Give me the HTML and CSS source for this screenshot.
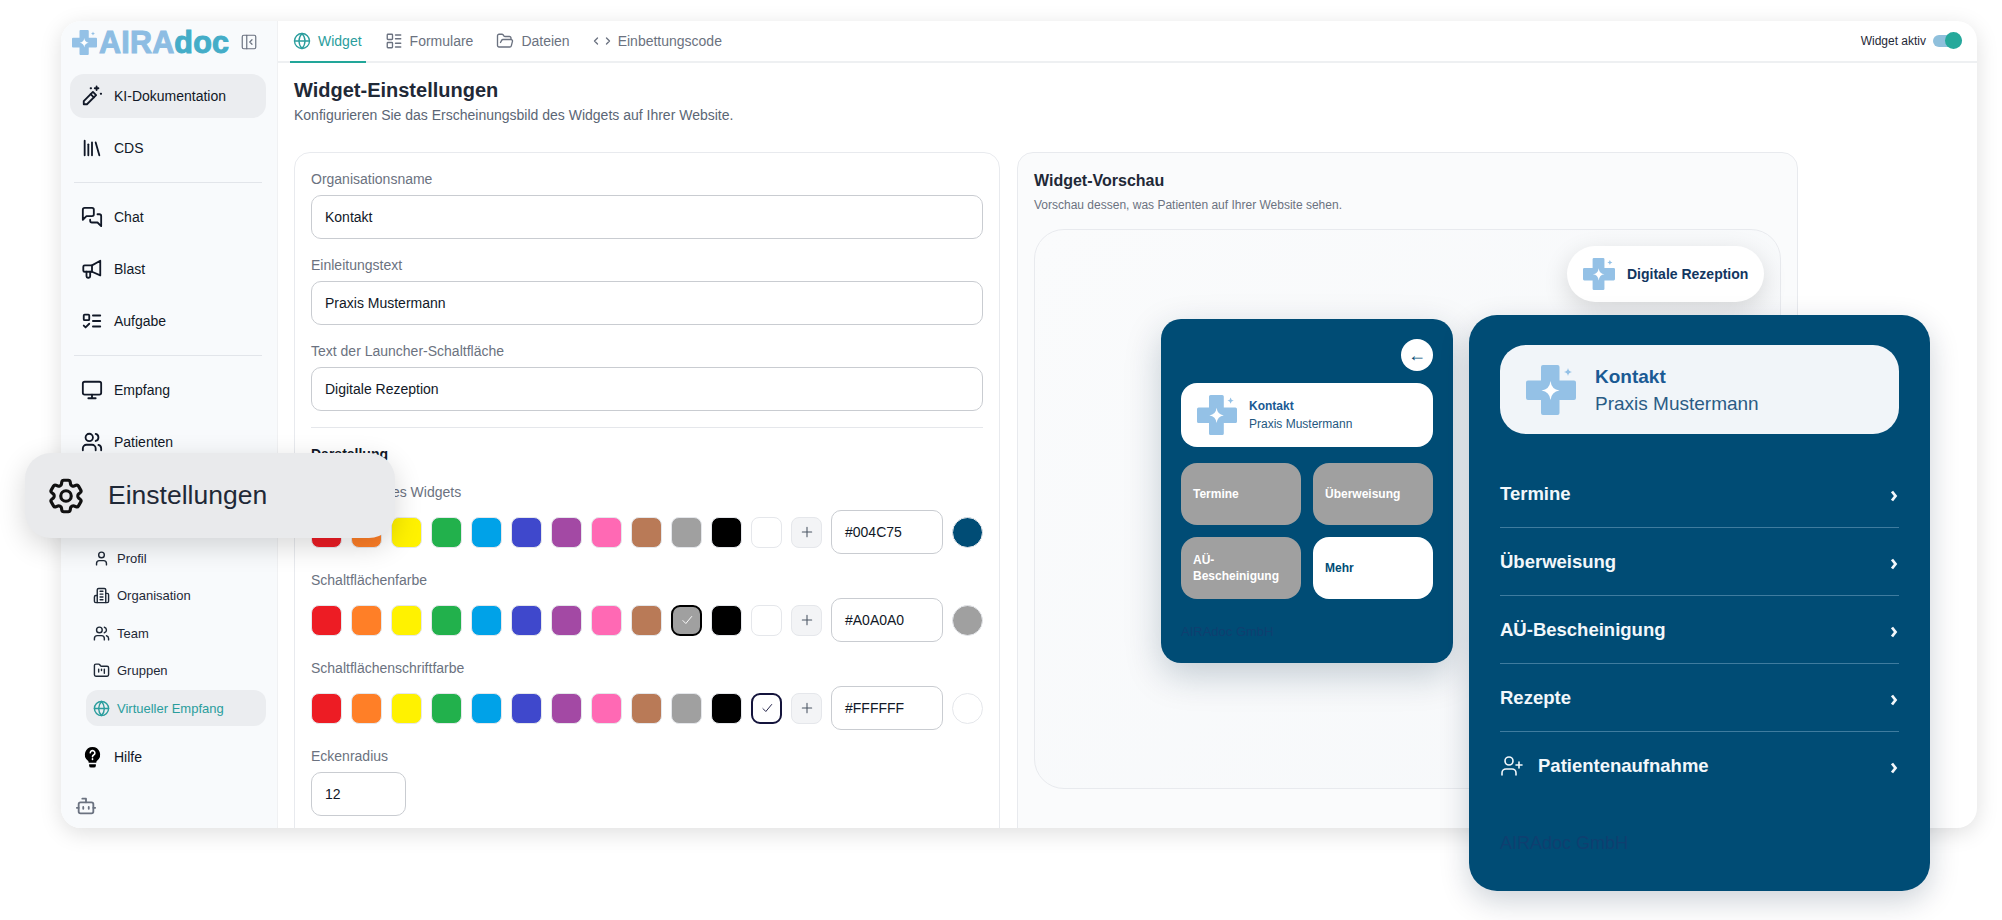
FILE: index.html
```html
<!DOCTYPE html>
<html lang="de">
<head>
  <meta charset="UTF-8">
  <title>AIRAdoc Widget-Einstellungen</title>
  <link rel="stylesheet" href="styles.css">
</head>
<body>
  <svg class="defs" width="0" height="0">
    <symbol id="cross" viewBox="0 0 100 100">
      <path fill="#94c1e6" d="M34 0h29a4 4 0 0 1 4 4v27h29a4 4 0 0 1 4 4v31a4 4 0 0 1-4 4H67v26a4 4 0 0 1-4 4H34a4 4 0 0 1-4-4V70H4a4 4 0 0 1-4-4V35a4 4 0 0 1 4-4h26V4a4 4 0 0 1 4-4z"/>
      <path fill="#fff" d="M49 32q2 17 18 19q-16 2-18 19q-2-17-18-19q16-2 18-19z"/>
      <path fill="#94c1e6" d="M84 6q1 7 8 8q-7 1-8 8q-1-7-8-8q7-1 8-8z"/>
    </symbol>
    <symbol id="globe" viewBox="0 0 24 24"><circle cx="12" cy="12" r="10"/><path d="M12 2a14.5 14.5 0 0 0 0 20 14.5 14.5 0 0 0 0-20"/><path d="M2 12h20"/></symbol>
    <symbol id="users" viewBox="0 0 24 24"><path d="M16 21v-2a4 4 0 0 0-4-4H6a4 4 0 0 0-4 4v2"/><circle cx="9" cy="7" r="4"/><path d="M22 21v-2a4 4 0 0 0-3-3.87"/><path d="M16 3.13a4 4 0 0 1 0 7.75"/></symbol>
    <symbol id="check" viewBox="0 0 24 24"><path d="M5 13l5 5L20 6"/></symbol>
    <symbol id="plus" viewBox="0 0 24 24"><path d="M5 12h14M12 5v14"/></symbol>
    <symbol id="chev" viewBox="0 0 8 12"><path d="M2 1.5 5.5 6 2 10.5"/></symbol>
  </svg>

  <div class="stage">
    <div class="app">
      <aside class="sidebar">
        <div class="logoRow">
          <svg class="logoMark"><use href="#cross"/></svg>
          <span class="logoText">AIRA<span class="logoDoc">doc</span></span>
          <svg class="icon collapse" viewBox="0 0 24 24"><rect x="3" y="3" width="18" height="18" rx="2"/><path d="M9 3v18"/><path d="m16 15-3-3 3-3"/></svg>
        </div>

        <a class="navItem active">
          <svg class="icon" viewBox="0 0 24 24"><path d="M3 17.5 13 7.5l3.5 3.5-10 10H3z"/><path d="m10.5 10 3.5 3.5"/><path d="M17 1.5v4M15 3.5h4"/><path d="M21.5 9.5h.5M10.5 3.5h.5"/></svg>
          KI-Dokumentation
        </a>
        <a class="navItem">
          <svg class="icon" viewBox="0 0 24 24"><path d="m16 6 4 14"/><path d="M12 6v14"/><path d="M8 8v12"/><path d="M4 4v16"/></svg>
          CDS
        </a>
        <div class="navLine"></div>
        <a class="navItem">
          <svg class="icon" viewBox="0 0 24 24"><path d="M14 9a2 2 0 0 1-2 2H6l-4 4V4a2 2 0 0 1 2-2h8a2 2 0 0 1 2 2z"/><path d="M18 9h2a2 2 0 0 1 2 2v11l-4-4h-6a2 2 0 0 1-2-2v-1"/></svg>
          Chat
        </a>
        <a class="navItem">
          <svg class="icon" viewBox="0 0 24 24"><path d="M21 3v16l-9-4H4a1.5 1.5 0 0 1-1.5-1.5v-4A1.5 1.5 0 0 1 4 8h8z"/><path d="M12 8v7"/><path d="M6 15v5a1.5 1.5 0 0 0 1.5 1.5h1A1.5 1.5 0 0 0 10 20v-5"/></svg>
          Blast
        </a>
        <a class="navItem">
          <svg class="icon" viewBox="0 0 24 24"><rect x="3" y="5" width="6" height="6" rx="1"/><path d="m3 17 2 2 4-4"/><path d="M13 6h8M13 12h8M13 18h8"/></svg>
          Aufgabe
        </a>
        <div class="navLine"></div>
        <a class="navItem">
          <svg class="icon" viewBox="0 0 24 24"><rect x="2" y="3" width="20" height="14" rx="2"/><path d="M8 21h8M12 17v4"/></svg>
          Empfang
        </a>
        <a class="navItem">
          <svg class="icon"><use href="#users"/></svg>
          Patienten
        </a>
        <!-- row of the raised Einstellungen item -->
        <div class="navItem"></div>

        <div class="subNav">
          <a class="subItem">
            <svg class="icon" viewBox="0 0 24 24"><path d="M19 21v-2a4 4 0 0 0-4-4H9a4 4 0 0 0-4 4v2"/><circle cx="12" cy="7" r="4"/></svg>
            Profil
          </a>
          <a class="subItem">
            <svg class="icon" viewBox="0 0 24 24"><path d="M6 22V4a2 2 0 0 1 2-2h8a2 2 0 0 1 2 2v18Z"/><path d="M6 12H4a2 2 0 0 0-2 2v6a2 2 0 0 0 2 2h2"/><path d="M18 9h2a2 2 0 0 1 2 2v9a2 2 0 0 1-2 2h-2"/><path d="M10 6h4M10 10h4M10 14h4M10 18h4"/></svg>
            Organisation
          </a>
          <a class="subItem">
            <svg class="icon"><use href="#users"/></svg>
            Team
          </a>
          <a class="subItem">
            <svg class="icon" viewBox="0 0 24 24"><path d="M4 20h16a2 2 0 0 0 2-2V8a2 2 0 0 0-2-2h-7.93a2 2 0 0 1-1.66-.9l-.82-1.2A2 2 0 0 0 7.93 3H4a2 2 0 0 0-2 2v13c0 1.1.9 2 2 2Z"/><path d="M8 10v4M12 10v2M16 10v6"/></svg>
            Gruppen
          </a>
          <a class="subItem subActive">
            <svg class="icon"><use href="#globe"/></svg>
            Virtueller Empfang
          </a>
        </div>

        <a class="navItem help">
          <svg class="bulb" viewBox="0 0 24 24"><path d="M12 1a8 8 0 0 0-5 14.2c.8.7 1 1.3 1 2.3h8c0-1 .2-1.6 1-2.3A8 8 0 0 0 12 1z"/><path d="M8.5 19h7v1.5a2 2 0 0 1-2 2h-3a2 2 0 0 1-2-2z"/><path class="bulbMark" d="M9.7 7a2.4 2.4 0 1 1 3.4 2.4c-.7.4-1.1.8-1.1 1.7M12 13.4v.6"/></svg>
          Hilfe
        </a>
        <svg class="icon bot" viewBox="0 0 24 24"><path d="M12 8V4H8"/><rect x="4" y="8" width="16" height="12" rx="2"/><path d="M2 14h2M20 14h2M15 13v2M9 13v2"/></svg>
      </aside>

      <main class="main">
        <nav class="tabs">
          <a class="tab tabActive"><svg class="icon"><use href="#globe"/></svg>Widget</a>
          <a class="tab">
            <svg class="icon" viewBox="0 0 24 24"><rect x="3" y="3" width="7" height="7" rx="1"/><rect x="3" y="14" width="7" height="7" rx="1"/><path d="M14 4h7M14 9h7M14 15h7M14 20h7"/></svg>
            Formulare
          </a>
          <a class="tab">
            <svg class="icon" viewBox="0 0 24 24"><path d="m6 14 1.5-2.9A2 2 0 0 1 9.24 10H20a2 2 0 0 1 1.94 2.5l-1.54 6a2 2 0 0 1-1.95 1.5H4a2 2 0 0 1-2-2V5a2 2 0 0 1 2-2h3.9a2 2 0 0 1 1.69.9l.81 1.2a2 2 0 0 0 1.67.9H18a2 2 0 0 1 2 2v2"/></svg>
            Dateien
          </a>
          <a class="tab">
            <svg class="icon" viewBox="0 0 24 24"><path d="m18 16 4-4-4-4"/><path d="m6 8-4 4 4 4"/></svg>
            Einbettungscode
          </a>
          <div class="status">
            Widget aktiv
            <span class="toggle"><span class="thumb"></span></span>
          </div>
        </nav>

        <div class="content">
          <h1 class="title">Widget-Einstellungen</h1>
          <p class="subtitle">Konfigurieren Sie das Erscheinungsbild des Widgets auf Ihrer Website.</p>

          <div class="columns">
            <section class="card form">
              <label class="label">Organisationsname</label>
              <div class="input">Kontakt</div>
              <label class="label">Einleitungstext</label>
              <div class="input">Praxis Mustermann</div>
              <label class="label">Text der Launcher-Schaltfläche</label>
              <div class="input">Digitale Rezeption</div>
              <hr class="rule">
              <h3 class="groupTitle">Darstellung</h3>

              <label class="label tight">Hauptfarbe des Widgets</label>
              <div class="colorRow">
                <span class="sw red"></span><span class="sw orange"></span><span class="sw yellow"></span><span class="sw green"></span><span class="sw sky"></span><span class="sw indigo"></span><span class="sw purple"></span><span class="sw pink"></span><span class="sw brown"></span><span class="sw gray"></span><span class="sw black"></span><span class="sw white"></span>
                <span class="sw add"><svg class="icon"><use href="#plus"/></svg></span>
                <div class="input hex">#004C75</div>
                <span class="dot navy"></span>
              </div>

              <label class="label tight">Schaltflächenfarbe</label>
              <div class="colorRow">
                <span class="sw red"></span><span class="sw orange"></span><span class="sw yellow"></span><span class="sw green"></span><span class="sw sky"></span><span class="sw indigo"></span><span class="sw purple"></span><span class="sw pink"></span><span class="sw brown"></span>
                <span class="sw gray picked"><svg class="icon tick"><use href="#check"/></svg></span>
                <span class="sw black"></span><span class="sw white"></span>
                <span class="sw add"><svg class="icon"><use href="#plus"/></svg></span>
                <div class="input hex">#A0A0A0</div>
                <span class="dot gray"></span>
              </div>

              <label class="label tight">Schaltflächenschriftfarbe</label>
              <div class="colorRow">
                <span class="sw red"></span><span class="sw orange"></span><span class="sw yellow"></span><span class="sw green"></span><span class="sw sky"></span><span class="sw indigo"></span><span class="sw purple"></span><span class="sw pink"></span><span class="sw brown"></span><span class="sw gray"></span><span class="sw black"></span>
                <span class="sw white pickedLight"><svg class="icon tick dark"><use href="#check"/></svg></span>
                <span class="sw add"><svg class="icon"><use href="#plus"/></svg></span>
                <div class="input hex">#FFFFFF</div>
                <span class="dot white"></span>
              </div>

              <label class="label">Eckenradius</label>
              <div class="input radius">12</div>
            </section>

            <section class="card preview">
              <h3 class="previewTitle">Widget-Vorschau</h3>
              <p class="previewSub">Vorschau dessen, was Patienten auf Ihrer Website sehen.</p>
              <div class="previewBox"></div>
            </section>
          </div>
        </div>
      </main>
    </div>

    <!-- floating pieces that sit over the app -->
    <div class="floatSettings">
      <svg class="icon" viewBox="0 0 24 24"><path d="M9.594 3.94c.09-.542.56-.94 1.11-.94h2.593c.55 0 1.02.398 1.11.94l.213 1.281c.063.374.313.686.645.87.074.04.147.083.22.127.325.196.72.257 1.075.124l1.217-.456a1.125 1.125 0 0 1 1.37.49l1.296 2.247a1.125 1.125 0 0 1-.26 1.431l-1.003.827c-.293.241-.438.613-.43.992a7.723 7.723 0 0 1 0 .255c-.008.378.137.75.43.991l1.004.827c.424.35.534.955.26 1.43l-1.298 2.247a1.125 1.125 0 0 1-1.369.491l-1.217-.456c-.355-.133-.75-.072-1.076.124a6.47 6.47 0 0 1-.22.128c-.331.183-.581.495-.644.869l-.213 1.281c-.09.543-.56.94-1.11.94h-2.594c-.55 0-1.019-.398-1.11-.94l-.213-1.281c-.062-.374-.312-.686-.644-.87a6.52 6.52 0 0 1-.22-.127c-.325-.196-.72-.257-1.076-.124l-1.217.456a1.125 1.125 0 0 1-1.369-.49l-1.297-2.247a1.125 1.125 0 0 1 .26-1.431l1.004-.827c.292-.24.437-.613.43-.991a6.932 6.932 0 0 1 0-.255c.007-.38-.138-.751-.43-.992l-1.004-.827a1.125 1.125 0 0 1-.26-1.43l1.297-2.247a1.125 1.125 0 0 1 1.37-.491l1.216.456c.356.133.751.072 1.076-.124.072-.044.146-.086.22-.128.332-.183.582-.495.644-.869l.214-1.28Z"/><circle cx="12" cy="12" r="3"/></svg>
      Einstellungen
    </div>

    <div class="launcher">
      <svg class="launcherMark"><use href="#cross"/></svg>
      Digitale Rezeption
    </div>

    <div class="miniWidget">
      <div class="miniTop"><span class="backBtn">←</span></div>
      <div class="miniHead">
        <svg class="miniMark"><use href="#cross"/></svg>
        <div><b class="orgName">Kontakt</b><br>Praxis Mustermann</div>
      </div>
      <div class="miniGrid">
        <div class="miniBtn">Termine</div>
        <div class="miniBtn">Überweisung</div>
        <div class="miniBtn">AÜ-Bescheinigung</div>
        <div class="miniBtn miniMore">Mehr</div>
      </div>
      <div class="miniFoot">AIRAdoc GmbH</div>
    </div>

    <div class="bigWidget">
      <div class="bigHead">
        <svg class="bigMark"><use href="#cross"/></svg>
        <div><b class="orgName">Kontakt</b><br>Praxis Mustermann</div>
      </div>
      <ul class="bigList">
        <li class="bigRow">Termine<svg class="chev"><use href="#chev"/></svg></li>
        <li class="bigRow">Überweisung<svg class="chev"><use href="#chev"/></svg></li>
        <li class="bigRow">AÜ-Bescheinigung<svg class="chev"><use href="#chev"/></svg></li>
        <li class="bigRow">Rezepte<svg class="chev"><use href="#chev"/></svg></li>
        <li class="bigRow">
          <span class="rowLeft">
            <svg class="icon" viewBox="0 0 24 24"><path d="M16 21v-2a4 4 0 0 0-4-4H6a4 4 0 0 0-4 4v2"/><circle cx="9" cy="7" r="4"/><path d="M19 8v6M22 11h-6"/></svg>
            Patientenaufnahme
          </span>
          <svg class="chev"><use href="#chev"/></svg>
        </li>
      </ul>
      <div class="bigFoot">AIRAdoc GmbH</div>
    </div>
  </div>
</body>
</html>
```
FILE: styles.css
```css
*{
  box-sizing: border-box;
}

body{
  margin: 0;
  background: #fff;
  font-family: 'Liberation Sans', Arial, sans-serif;
  font-size: 14px;
  color: #111827;
  overflow: hidden;
}

.defs{
  position: absolute;
}

.stage{
  position: relative;
  width: 2002px;
  height: 920px;
  padding: 21px 25px 0 61px;
  overflow: hidden;
}

.icon{
  width: 22px;
  height: 22px;
  flex: none;
  fill: none;
  stroke: currentColor;
  stroke-width: 2;
  stroke-linecap: round;
  stroke-linejoin: round;
}

.app{
  display: flex;
  width: 1916px;
  height: 807px;
  background: #fff;
  border-radius: 20px;
  overflow: hidden;
  box-shadow: 0 5px 22px rgba(0, 0, 0, .13);
}

/* sidebar */
.sidebar{
  width: 216px;
  flex: none;
  padding: 0 11px 0 9px;
  background: #f8fafc;
  display: flex;
  flex-direction: column;
}

.logoRow{
  display: flex;
  align-items: center;
  height: 53px;
  padding: 0 0 11px 2px;
  flex: none;
}

.logoMark{
  width: 25px;
  height: 25px;
  flex: none;
}

.logoText{
  margin-left: 2px;
  font-size: 30.5px;
  font-weight: 700;
  letter-spacing: .2px;
  color: #8dbde3;
  -webkit-text-stroke: 1px currentColor;
}

.logoDoc{
  color: #44adc8;
}

.collapse{
  width: 18px;
  height: 18px;
  margin-left: 11px;
  color: #6b7280;
  stroke-width: 1.6;
}

.navItem{
  display: flex;
  align-items: center;
  gap: 11px;
  height: 44px;
  margin-bottom: 8px;
  padding-left: 11px;
  border-radius: 14px;
  color: #111827;
  flex: none;
}

.navItem.active{
  background: #ebedf0;
}

.navLine{
  height: 1px;
  margin: 4px 4px 12px;
  background: #e2e5ea;
  flex: none;
}

.subNav{
  margin: 16px 0 9px 16px;
  display: flex;
  flex-direction: column;
  gap: 1.5px;
  font-size: 13px;
  flex: none;
}

.subItem{
  display: flex;
  align-items: center;
  gap: 7px;
  height: 36px;
  padding-left: 7px;
  border-radius: 12px;
  color: #1f2937;
}

.subItem .icon{
  width: 17px;
  height: 17px;
}

.subActive{
  background: #ebedf0;
  color: #2a9d9d;
}

.help{
  margin-bottom: 0;
  gap: 10px;
}

.bulb{
  width: 23px;
  height: 23px;
  flex: none;
  fill: #000;
}

.bulbMark{
  fill: none;
  stroke: #fff;
  stroke-width: 1.7;
  stroke-linecap: round;
}

.bot{
  margin: 16px 0 0 5px;
  color: #6b7280;
}

/* main */
.main{
  flex: 1;
  min-width: 0;
  border-left: 1px solid #f0f1f3;
}

.tabs{
  display: flex;
  align-items: stretch;
  height: 42px;
  padding: 0 15px 0 12px;
  border-bottom: 2px solid #eef0f2;
}

.tab{
  display: flex;
  align-items: center;
  gap: 7px;
  height: 42px;
  padding: 0 4px 3px 3px;
  margin-right: 16px;
  color: #6b7280;
}

.tab .icon{
  width: 18px;
  height: 18px;
  stroke-width: 1.8;
}

.tabActive{
  color: #2a9d9d;
  border-bottom: 2px solid #22a699;
  padding-bottom: 1px;
}

.status{
  margin-left: auto;
  display: flex;
  align-items: center;
  gap: 7px;
  font-size: 12px;
  color: #1f2937;
}

.toggle{
  position: relative;
  width: 29px;
  height: 12px;
  border-radius: 6px;
  background: #8fc0dc;
}

.thumb{
  position: absolute;
  right: 0;
  top: -3px;
  width: 17px;
  height: 17px;
  border-radius: 50%;
  background: #25a99b;
}

.content{
  padding: 15px 16px 0;
}

.title{
  margin: 0;
  font-size: 20px;
  line-height: 24px;
  font-weight: 700;
  color: #1f2937;
}

.subtitle{
  margin: 3px 0 0;
  line-height: 20px;
  color: #5b6675;
}

.columns{
  display: grid;
  grid-template-columns: 706px 781px;
  gap: 17px;
  margin-top: 27px;
}

.card{
  height: 760px;
  padding: 16px;
  border: 1px solid #e8eaee;
  border-radius: 16px;
  background: #fff;
}

/* form card */
.label{
  display: block;
  margin: 0 0 6px;
  line-height: 20px;
  color: #6b7280;
}

.input{
  display: flex;
  align-items: center;
  height: 44px;
  margin-bottom: 16px;
  padding: 0 13px;
  border: 1px solid #c9ccd1;
  border-radius: 10px;
  background: #fff;
  color: #111827;
}

.rule{
  margin: 0 0 16px;
  border: 0;
  border-top: 1px solid #e5e7eb;
}

.groupTitle{
  margin: 0 0 18px;
  font-size: 14px;
  line-height: 20px;
  color: #111827;
}

.label.tight{
  margin-bottom: 8px;
}

.colorRow{
  display: flex;
  align-items: center;
  gap: 9px;
  height: 44px;
  margin-bottom: 16px;
}

.sw{
  display: flex;
  align-items: center;
  justify-content: center;
  width: 31px;
  height: 31px;
  flex: none;
  border: 1px solid #e5e7eb;
  border-radius: 8px;
}

.red{ background: #ed1c24; }
.orange{ background: #ff7f27; }
.yellow{ background: #fff200; }
.green{ background: #22b14c; }
.sky{ background: #00a2e8; }
.indigo{ background: #3f48cc; }
.purple{ background: #a349a4; }
.pink{ background: #ff69b4; }
.brown{ background: #b97a57; }
.gray{ background: #a0a0a0; }
.black{ background: #000; }
.white{ background: #fff; }

.add{
  background: #f3f4f6;
  color: #4b5563;
}

.add .icon{
  width: 16px;
  height: 16px;
  stroke-width: 1.6;
}

.picked{
  border: 2px solid #000;
  border-radius: 9px;
}

.pickedLight{
  border: 2px solid #14143c;
  border-radius: 9px;
}

.tick{
  width: 14px;
  height: 14px;
  color: #fff;
  stroke-width: 1.6;
}

.tick.dark{
  color: #14143c;
}

.hex{
  width: 112px;
  flex: none;
  margin: 0;
}

.dot{
  width: 31px;
  height: 31px;
  flex: none;
  border: 1px solid #e5e7eb;
  border-radius: 50%;
}

.dot.navy{
  background: #004c75;
}

.radius{
  width: 95px;
}

/* preview card */
.previewTitle{
  margin: 0;
  font-size: 16px;
  line-height: 24px;
  color: #1f2937;
}

.previewSub{
  margin: 4px 0 0;
  font-size: 12px;
  line-height: 16px;
  color: #6b7280;
}

.preview{
  background: #fafbfc;
}

.previewBox{
  height: 560px;
  margin-top: 16px;
  border: 1px solid #e8eaee;
  border-radius: 30px;
  background: linear-gradient(135deg, #fafbfc, #f6f8fa);
}

/* overlays */
.floatSettings{
  position: absolute;
  left: 25px;
  top: 453px;
  width: 370px;
  height: 85px;
  display: flex;
  align-items: center;
  gap: 21px;
  padding-left: 20px;
  border-radius: 26px;
  background: #e9eaec;
  box-shadow: 0 8px 28px rgba(0, 0, 0, .16);
  font-size: 26.5px;
  color: #1f2937;
}

.floatSettings .icon{
  width: 42px;
  height: 42px;
  color: #111;
  stroke-width: 1.8;
}

.launcher{
  position: absolute;
  left: 1567px;
  top: 246px;
  width: 197px;
  height: 56px;
  display: flex;
  align-items: center;
  gap: 12px;
  padding-left: 16px;
  border-radius: 28px;
  background: #fff;
  box-shadow: 0 8px 26px rgba(0, 0, 0, .14);
  font-weight: 700;
  color: #12365f;
}

.launcherMark{
  width: 32px;
  height: 32px;
}

.miniWidget{
  position: absolute;
  left: 1161px;
  top: 319px;
  width: 292px;
  height: 344px;
  padding: 20px;
  border-radius: 20px;
  background: #004c75;
  box-shadow: 0 12px 36px rgba(0, 40, 70, .22);
}

.miniTop{
  display: flex;
  justify-content: flex-end;
  margin-bottom: 12px;
}

.backBtn{
  display: flex;
  align-items: center;
  justify-content: center;
  width: 32px;
  height: 32px;
  border-radius: 50%;
  background: #fff;
  font-size: 18px;
  color: #004c75;
}

.miniHead{
  display: flex;
  align-items: center;
  gap: 12px;
  height: 64px;
  padding-left: 16px;
  border-radius: 16px;
  background: #fff;
  font-size: 12px;
  line-height: 18px;
  color: #1f5780;
}

.orgName{
  color: #1a5a94;
}

.miniMark{
  width: 40px;
  height: 40px;
  flex: none;
}

.miniGrid{
  display: grid;
  grid-template-columns: 120px 120px;
  grid-auto-rows: 62px;
  gap: 12px;
  margin-top: 16px;
}

.miniBtn{
  display: flex;
  align-items: center;
  padding: 0 12px;
  border-radius: 16px;
  background: #a0a0a0;
  font-size: 12px;
  line-height: 16px;
  font-weight: 700;
  color: #fff;
}

.miniMore{
  background: #fff;
  color: #004c75;
}

.miniFoot{
  margin-top: 24px;
  font-size: 13px;
  line-height: 18px;
  color: #0f3f70;
}

.bigWidget{
  position: absolute;
  left: 1469px;
  top: 315px;
  width: 461px;
  height: 576px;
  padding: 30px 31px;
  border-radius: 28px;
  background: #004c75;
  box-shadow: 0 10px 30px rgba(0, 30, 60, .2);
}

.bigHead{
  display: flex;
  align-items: center;
  gap: 19px;
  height: 89px;
  padding-left: 26px;
  border-radius: 26px;
  background: #f1f5f9;
  font-size: 19px;
  line-height: 27px;
  color: #2a5c85;
}

.bigMark{
  width: 50px;
  height: 50px;
  flex: none;
}

.bigList{
  list-style: none;
  margin: 26px 0 0;
  padding: 0;
}

.bigRow{
  display: flex;
  align-items: center;
  justify-content: space-between;
  height: 68px;
  border-bottom: 1px solid #3f7c9f;
  font-size: 18.5px;
  font-weight: 700;
  color: #f2f7fb;
}

.bigRow:last-child{
  border-bottom: 0;
}

.rowLeft{
  display: flex;
  align-items: center;
  gap: 14px;
}

.rowLeft .icon{
  width: 24px;
  height: 24px;
  stroke-width: 1.6;
}

.chev{
  width: 8px;
  height: 12px;
  margin: 4px 1px 0 0;
  fill: none;
  stroke: #f2f7fb;
  stroke-width: 2.8;
}

.bigFoot{
  margin-top: 33px;
  font-size: 18px;
  line-height: 20px;
  color: #0f3f70;
}
```
